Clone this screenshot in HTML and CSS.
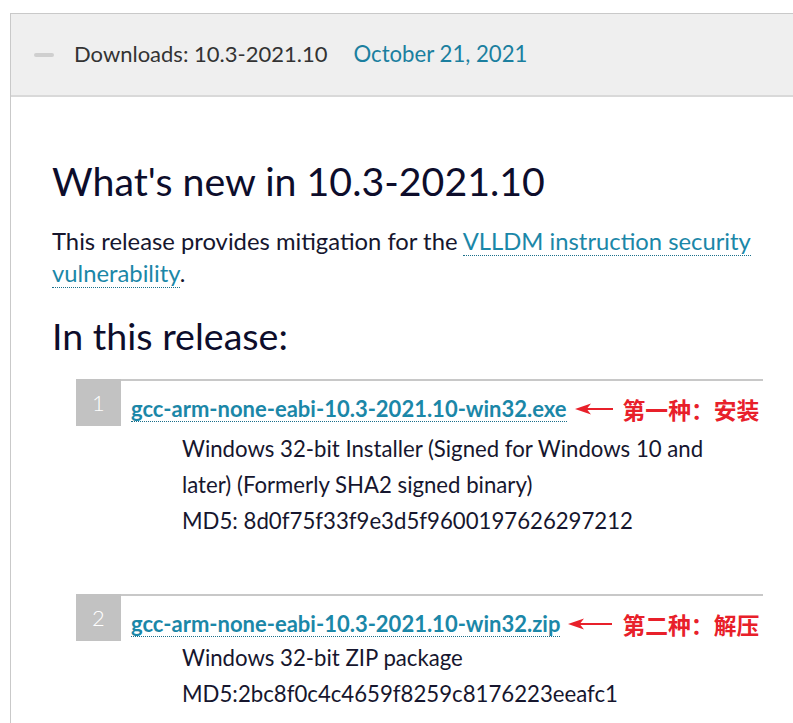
FILE: index.html
```html
<!DOCTYPE html>
<html lang="en">
<head>
<meta charset="utf-8">
<title>Downloads: 10.3-2021.10</title>
<link rel="stylesheet" href="styles.css">
</head>
<body>
<section class="panel">
  <header class="panel-head">
    <span class="toggle"></span>
    <span class="head-title">Downloads: 10.3-2021.10</span>
    <span class="head-date">October 21, 2021</span>
  </header>
  <div class="panel-body">
    <h1 class="title">What's new in 10.3-2021.10</h1>
    <p class="lead">This release provides mitigation for the <a class="link" href="#">VLLDM instruction security vulnerability</a>.</p>
    <h2 class="subtitle">In this release:</h2>
    <ol class="files">
      <li class="file">
        <div class="file-head">
          <span class="num">1</span>
          <div class="file-title">
            <a class="file-link" href="#">gcc-arm-none-eabi-10.3-2021.10-win32.exe</a>
            <svg class="arrow" width="38" height="12" viewBox="0 0 38 12"><path d="M0 6 L16 0.5 L12.5 5 L38 5 L38 7 L12.5 7 L16 11.5 Z" fill="#e8202a"/></svg>
            <span class="note">第一种：安装</span>
          </div>
        </div>
        <div class="desc desc-first">Windows 32-bit Installer (Signed for Windows 10 and later) (Formerly SHA2 signed binary)<br>MD5: 8d0f75f33f9e3d5f9600197626297212</div>
      </li>
      <li class="file file-second">
        <div class="file-head">
          <span class="num">2</span>
          <div class="file-title">
            <a class="file-link" href="#">gcc-arm-none-eabi-10.3-2021.10-win32.zip</a>
            <svg class="arrow" width="44" height="12" viewBox="0 0 44 12"><path d="M0 6 L16 0.5 L12.5 5 L44 5 L44 7 L12.5 7 L16 11.5 Z" fill="#e8202a"/></svg>
            <span class="note">第二种：解压</span>
          </div>
        </div>
        <div class="desc desc-second">Windows 32-bit ZIP package<br>MD5:2bc8f0c4c4659f8259c8176223eeafc1</div>
      </li>
    </ol>
  </div>
</section>
</body>
</html>
```
FILE: styles.css
```css
html, body {
  margin: 0;
  padding: 0;
  background: #ffffff;
}
body {
  font-family: Lato, "Noto Sans", sans-serif;
  color: #16162e;
  overflow: hidden;
  height: 723px;
}
.panel {
  margin: 13px 0 0 10px;
  border-top: 1px solid #c9c9c9;
  border-left: 1px solid #c9c9c9;
  min-height: 800px;
}
.panel-head {
  height: 81px;
  background: #efefef;
  border-bottom: 2px solid #d9d9d9;
  display: flex;
  align-items: center;
  padding-left: 23px;
}
.toggle {
  width: 20px;
  height: 4px;
  border-radius: 2px;
  background: #cfcfcf;
  margin-right: 20px;
}
.head-title {
  font-size: 22px;
  color: #333333;
  margin-right: 26px;
  line-height: 26px;
  padding-bottom: 2px;
}
.head-date {
  font-size: 22.2px;
  color: #1b7f9f;
  line-height: 26px;
  padding-bottom: 2px;
}
.panel-body {
  padding: 56px 0 0 41px;
}
.title {
  margin: 0;
  font-size: 39.3px;
  font-weight: 400;
  line-height: 56px;
  color: #0d0d2b;
}
.lead {
  margin: 16px 0 0;
  font-size: 23.8px;
  line-height: 32px;
  width: 720px;
}
.link {
  color: #1b87a8;
  text-decoration: none;
  border-bottom: 1px dotted #1b6f8a;
}
.subtitle {
  margin: 22px 0 0;
  font-size: 37.6px;
  font-weight: 400;
  line-height: 50px;
  color: #0d0d2b;
}
.files {
  list-style: none;
  margin: 18px 0 0 24px;
  padding: 0;
  width: 687px;
}
.file-second {
  margin-top: 55px;
}
.file-head {
  display: flex;
  align-items: flex-start;
}
.num {
  width: 45px;
  height: 47px;
  background: #c2c2c2;
  color: #ffffff;
  font-size: 22px;
  font-weight: 300;
  display: flex;
  align-items: center;
  justify-content: center;
  flex: none;
}
.file-title {
  flex: 1;
  border-top: 2px solid #c8c8c8;
  padding: 11px 0 0 10px;
  display: flex;
  align-items: center;
  height: 34px;
}
.file-link {
  font-size: 22px;
  font-weight: 700;
  color: #1b87a8;
  text-decoration: none;
  border-bottom: 1px dotted #1b6f8a;
  line-height: 24px;
}
.arrow {
  margin-left: 8px;
  margin-right: 10px;
}
.note {
  font-family: "Noto Sans CJK SC", sans-serif;
  font-weight: 700;
  font-size: 22.8px;
  color: #e8202a;
}
.desc {
  margin-left: 106px;
  font-size: 22.2px;
  line-height: 36px;
  width: 545px;
}
.desc-first {
  margin-top: 5px;
}
.desc-second {
  margin-top: -1px;
}
```
